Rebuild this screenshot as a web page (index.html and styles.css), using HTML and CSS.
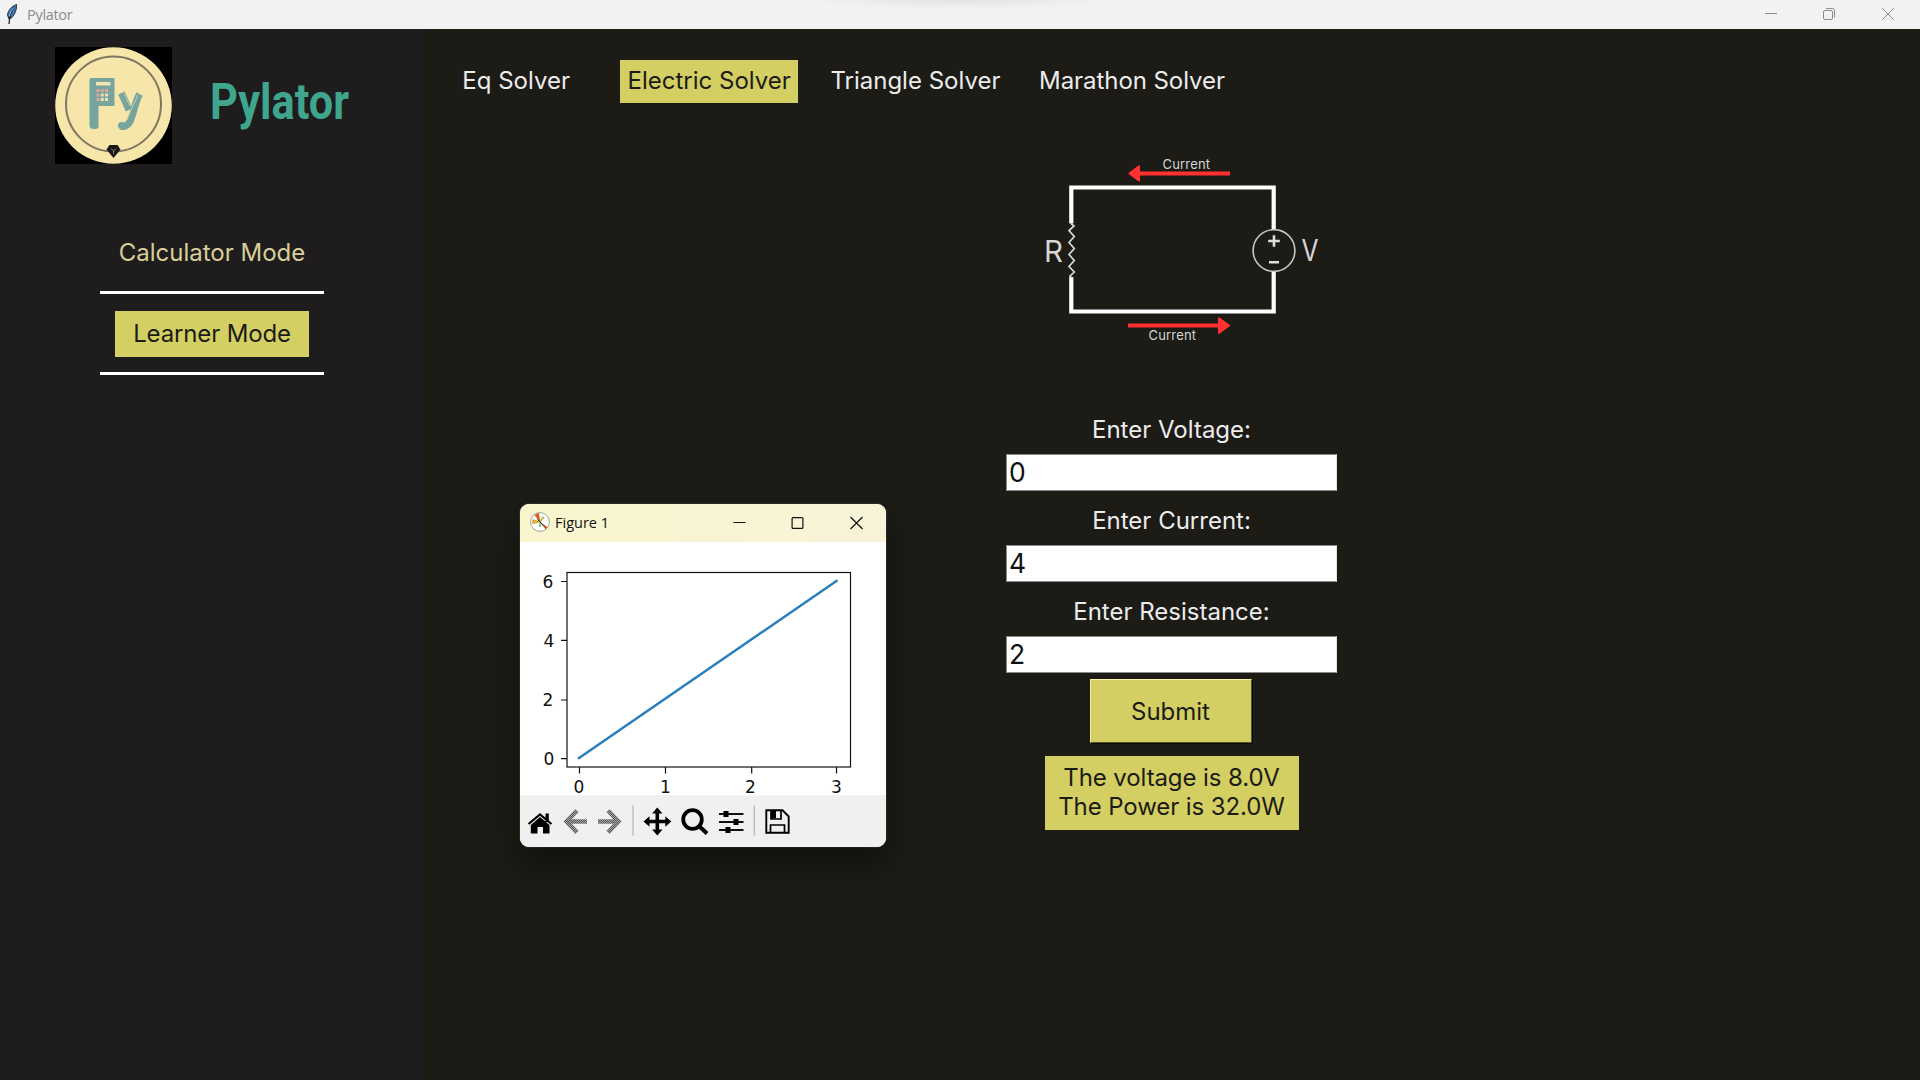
FILE: index.html
```html
<!DOCTYPE html>
<html lang="en">
<head>
<meta charset="utf-8">
<title>Pylator</title>
<link rel="stylesheet" href="styles.css">
</head>
<body>
<header class="titlebar">
  <svg class="feather" width="12" height="21" viewBox="0 0 12 21"><path d="M10.5.5C6 2 2 6 1.500 11L3 15l3-1.500C9 10 11 5 10.500.500Z" fill="#3f78c4" stroke="#2b3038" stroke-width="1"/><path d="M8.500 3C5 7 3.500 11 3 20" fill="none" stroke="#20242b" stroke-width="1.300"/><path d="M8 3.500C5.500 6 4 9 3.500 12" fill="none" stroke="#9cc4f0" stroke-width="1"/></svg>
  <span class="app-name">Pylator</span>
  <svg class="window-buttons" width="130" height="14" viewBox="0 0 130 14" fill="none" stroke="#8c8c8c"><path d="M0 6.500H12"/><rect x="58.500" y="3.500" width="9" height="9" rx="1.500"/><path d="M61 1.500H67.500Q69.500 1.500 69.500 3.500V10.500"/><path d="M117 1L129 13M129 1L117 13"/></svg>
</header>
<div class="workspace">
  <aside class="sidebar">
    <div class="brand">
      <svg width="117" height="117" viewBox="0 0 117 117"><rect width="117" height="117" fill="#000"/><circle cx="58.500" cy="58.500" r="58.300" fill="#f6e6aa"/><circle cx="58.500" cy="57" r="47.500" fill="none" stroke="#7d7763" stroke-width="2"/><path d="M36 31H59.500V59H43.500V80Q43 82 39 82Q34.500 82 34.500 79V33Q34.500 31 36 31Z" fill="#77a59e"/><rect x="41" y="35" width="14.500" height="3.500" fill="#f2e5ad"/><g fill="#dba69c"><rect x="41.500" y="42" width="3" height="3"/><rect x="45.800" y="42" width="3" height="3"/><rect x="50" y="42" width="3" height="3"/><rect x="41.500" y="46.500" width="3" height="3"/><rect x="41.500" y="51" width="3" height="3"/></g><g fill="#eee3ad"><rect x="45.800" y="46.500" width="3" height="3"/><rect x="50" y="46.500" width="3" height="3"/><rect x="45.800" y="51" width="3" height="3"/><rect x="50" y="51" width="3" height="3"/></g><path d="M66.500 46L74 63M84.500 47C79 57 78 74 72 78Q69 80.500 66 79" fill="none" stroke="#77a59e" stroke-width="7"/><circle cx="66.500" cy="78.500" r="3.500" fill="#77a59e"/><path d="M69 46L75 59M83 48L76 63L72 73" fill="none" stroke="#cbd3a6" stroke-width=".9"/><path d="M54.500 98H62.500L65.500 102.500L61 108L58.500 111L56 108L51.500 102.500Z" fill="#191817"/><path d="M56 101.500L58.500 104L61 101.500M58.500 104V107" fill="none" stroke="#8d8465" stroke-width="1"/></svg>
      <svg class="wordmark" width="142" height="72" viewBox="0 0 142 72"><text class="wordmark-text" x="-1" y="52" textLength="139" lengthAdjust="spacingAndGlyphs">Pylator</text></svg>
    </div>
    <nav class="modes">
      <a class="mode">Calculator Mode</a>
      <a class="mode active">Learner Mode</a>
    </nav>
  </aside>
  <main class="main">
    <nav class="tabs">
      <a class="tab">Eq Solver</a>
      <a class="tab active">Electric Solver</a>
      <a class="tab">Triangle Solver</a>
      <a class="tab">Marathon Solver</a>
    </nav>
    <svg class="circuit" width="303" height="220" viewBox="0 0 303 220">
      <g fill="none" stroke="#fff" stroke-width="4.200">
        <path d="M51.300 83.500V47.500H253.700V90"/>
        <path d="M51.300 137V171.500H253.700V131"/>
      </g>
      <path d="M51 83.500L54 86L49 90.500L54.300 96.500L49 102.500L54.300 108.500L49 114.500L54.300 120.500L49 126.500L54.300 132L50 136L52 138" fill="none" stroke="#d8d8d6" stroke-width="1.700"/>
      <circle cx="254" cy="110.500" r="20.900" fill="none" stroke="#c8c8c6" stroke-width="1.600"/>
      <path d="M248.200 101H259.800M254 95.200V106.800M249 122.300H259" fill="none" stroke="#dededc" stroke-width="2.600"/>
      <g fill="#ff3131" stroke="#ff3131" stroke-linejoin="round">
        <path d="M118 33.500H210M108 185.500H200" stroke-width="4"/>
        <path d="M109.500 33.500L119 26.200V40.500Z" stroke-width="2"/>
        <path d="M209 185.500L199 178.200V193Z" stroke-width="2"/>
      </g>
      <g class="circuit-text">
        <text x="142.500" y="29" textLength="47.500">Current</text>
        <text x="128.500" y="200" textLength="47.500">Current</text>
        <text class="symbol" x="24" y="121.500">R</text>
        <text class="symbol" x="281.500" y="121" textLength="17" lengthAdjust="spacingAndGlyphs">V</text>
      </g>
    </svg>
    <form class="solver">
      <label class="field">Enter Voltage:<input class="entry" value="0"></label>
      <label class="field">Enter Current:<input class="entry" value="4"></label>
      <label class="field">Enter Resistance:<input class="entry" value="2"></label>
      <button class="submit" type="button">Submit</button>
      <output class="result">The voltage is 8.0V<br>The Power is 32.0W</output>
    </form>
  </main>
</div>
<section class="figure">
  <header class="figure-bar">
    <svg width="20" height="20" viewBox="0 0 20 20"><circle cx="10" cy="10" r="9.400" fill="#fff" stroke="#8a8a80" stroke-width=".8"/><path d="M10 10L5 3.200Q6.500 1.800 8.600 1.600Z" fill="#ee5a12" stroke="#a33c08" stroke-width=".5"/><path d="M10 10L2.800 11.600Q2.300 9.500 3 7.600Z" fill="#f3b414" stroke="#a87a10" stroke-width=".5"/><path d="M10 10L17 15.200L15.700 16.800Z" fill="#e0501a" stroke="#8c3a10" stroke-width=".6"/><path d="M10 10L12.200 4.700L14.200 5.800Z" fill="#c8e04a" stroke="#758a20" stroke-width=".5"/><path d="M10 10L9.200 14.500H11Z" fill="#43c46a" stroke="#43c46a" stroke-width=".4"/><path d="M7.500 7.500L12.500 12.500" stroke="#403020" stroke-width="1"/></svg>
    <span class="figure-title">Figure 1</span>
    <svg class="figure-buttons" width="132" height="14" viewBox="0 0 132 14" fill="none" stroke="#111" stroke-width="1.200"><path d="M.5 6.500H12.500"/><rect x="59.100" y="1.600" width="10.800" height="10.800" rx="1"/><path d="M117.500 1L129.500 13M129.500 1L117.500 13"/></svg>
  </header>
  <svg class="plot" width="366" height="253" viewBox="0 0 366 253">
    <rect x="47" y="30.500" width="283.500" height="194.500" fill="none" stroke="#111" stroke-width="1.200"/>
    <path d="M41 39.500H47M41 98.300H47M41 158H47M41 216.700H47M59.500 225V231.500M145.500 225V231.500M231.700 225V231.500M316.500 225V231.500" stroke="#111" stroke-width="1.200"/>
    <path d="M59 216L316.500 39" stroke="#2a80bd" stroke-width="2.500" stroke-linecap="square"/>
    <g class="ticks">
      <text x="28" y="46">6</text><text x="29" y="104.700">4</text><text x="28" y="164">2</text><text x="29" y="222.700">0</text>
      <text x="59" y="251.300">0</text><text x="145.500" y="251.300">1</text><text x="230.500" y="251.300">2</text><text x="316.500" y="251.300">3</text>
    </g>
  </svg>
  <footer class="toolbar">
    <svg width="366" height="52" viewBox="0 0 366 52">
      <defs><pattern id="stipple" width="2" height="2" patternUnits="userSpaceOnUse"><rect width="2" height="2" fill="#a8a8a8"/><rect width="1" height="1" fill="#555"/><rect x="1" y="1" width="1" height="1" fill="#555"/></pattern></defs>
      <path d="M8.500 29L20 19.500L31.500 29" fill="none" stroke="#000" stroke-width="2.200"/>
      <path d="M25.500 18.500H28.800V27H25.500ZM20 22L29.500 30V38.500H23V32H17.500V38.500H10.800V30Z" fill="#000"/>
      <path d="M57 15.500L46.500 26.500L57 37.500M88 15.500L98.500 26.500L88 37.500" fill="none" stroke="url(#stipple)" stroke-width="4.500"/>
      <path d="M47 24.250H67V28.750H47ZM78 24.250H97V28.750H78Z" fill="url(#stipple)"/>
      <path d="M113 10.500V40.500M234.300 10.500V40.500" stroke="#bcbcbc" stroke-width="1.400"/>
      <path d="M137.300 17V36M128 26.500H147" stroke="#000" stroke-width="3.600"/>
      <path d="M137.300 12.500L142.500 18.500H132.100ZM137.300 40.500L142.500 34.500H132.100ZM123.500 26.500L129.500 21.300V31.700ZM151.300 26.500L145.300 21.300V31.700Z" fill="#000"/>
      <circle cx="172.500" cy="24.500" r="9.300" fill="none" stroke="#000" stroke-width="3.800"/>
      <path d="M179.500 31.500L187 38.500" stroke="#000" stroke-width="4"/>
      <path d="M199 19H223.500M199 27H223.500M199 35H223.500" stroke="#111" stroke-width="1.800"/>
      <path d="M203.500 16H208.500V22H203.500ZM213.500 24H218.500V30H213.500ZM205.500 32H210.500V38H205.500Z" fill="#000"/>
      <path d="M246.300 15.300H262.500L268.700 21.500V37.700H246.300Z" fill="none" stroke="#000" stroke-width="1.900"/>
      <path d="M251 15V24H261V15M250.500 37.500V30H264.500V37.500" fill="none" stroke="#000" stroke-width="1.700"/>
      <path d="M251 15.500H256V23.500H251Z" fill="#000"/>
    </svg>
  </footer>
</section>
</body>
</html>
```
FILE: styles.css
```css
* { box-sizing: border-box; }

body {
  display: flex;
  flex-direction: column;
  height: 1080px;
  margin: 0;
  overflow: hidden;
  background: #1c1b16;
  color: #ececec;
  font: 24px/29px Inter, sans-serif;
}

svg { display: block; flex: none; }

/* Main window title bar */
.titlebar {
  display: flex;
  height: 29px;
  padding: 4px 25px 0 6px;
  background:
    radial-gradient(ellipse 150px 9px at 960px 0, #e2e2e2, #e2e2e200) no-repeat,
    #f2f2f2;
}

.app-name {
  margin-left: 9px;
  color: #8c8c8c;
  font: 14.500px/22px "Open Sans", sans-serif;
  letter-spacing: -0.3px;
}

.window-buttons { margin: 3px 0 0 auto; }

.workspace { display: flex; flex: 1; }

/* Sidebar */
.sidebar {
  width: 423px;
  background: #1f1c1d;
}

.brand {
  display: flex;
  padding: 18px 0 0 55px;
}

.wordmark { margin: 20px 0 0 38.500px; }

.wordmark-text {
  fill: #3fa58d;
  font: bold 50px Roboto, sans-serif;
}

.modes {
  display: flex;
  flex-direction: column;
  align-items: center;
  width: 224px;
  margin: 66px 0 0 100px;
}

.mode {
  display: flex;
  justify-content: center;
  height: 46px;
  padding-top: 8px;
  color: #d8cf98;
}

.mode::after {
  content: "";
  position: absolute;
  width: 224px;
  height: 3px;
  margin-top: 53px;
  background: #fff;
}

.mode.active {
  width: 194px;
  margin-top: 35px;
  letter-spacing: -0.15px;
}

.active {
  background: #d3cf63;
  color: #1c1b16;
}

/* Content */
.main {
  display: flex;
  flex: 1;
  flex-direction: column;
  align-items: center;
}

.tabs {
  display: flex;
  align-self: flex-start;
  padding: 31px 0 0 32px;
}

.tab {
  height: 43px;
  padding: 6px 7.300px 8px;
}

.tab:nth-child(2) { margin-left: 43px; }
.tab:nth-child(3) { margin-left: 25px; }
.tab:nth-child(4) { margin-left: 24px; letter-spacing: -0.06px; }

.circuit { margin-top: 37px; }

.circuit-text {
  fill: #d6d6d4;
  font-size: 13px;
}

.symbol { font-size: 29.500px; }

.solver {
  display: flex;
  flex-direction: column;
  align-items: center;
  margin-top: 55px;
}

.field {
  display: flex;
  flex-direction: column;
  align-items: center;
  gap: 10px;
  height: 91px;
}

.entry {
  width: 331px;
  height: 37px;
  padding: 0 0 2px 2px;
  border: 1px solid;
  border-color: #8a8a8a #e3e3e3 #8a8a8a #8a8a8a;
  background: #fff;
  color: #111;
  font: 26.500px/32px Inter, sans-serif;
}

.submit {
  width: 162px;
  height: 64px;
  margin: -9px 2px 0 0;
  padding: 0;
  border: solid;
  border-width: 1px 1px 1px 1px;
  border-color: #f4f0a0 #55532c #55532c #f4f0a0;
  background: #d3cf63;
  box-shadow: 1px 1px #0b0b08;
  color: #1c1b16;
  font: inherit;
}

.result {
  width: 254px;
  height: 74px;
  margin-top: 13px;
  padding-top: 7px;
  background: #d3cf63;
  color: #1c1b16;
  letter-spacing: -0.1px;
  text-align: center;
}

/* Floating plot window */
.figure {
  position: absolute;
  top: 504px;
  left: 520px;
  width: 366px;
  height: 343px;
  overflow: hidden;
  border-radius: 9px;
  background: #fff;
  box-shadow: 0 16px 36px #00000070, 0 0 2px #6a6a60;
}

.figure-bar {
  display: flex;
  height: 38px;
  padding: 8px 14px 0 10px;
  background: linear-gradient(90deg, #f9f6cd, #f8f3d8);
}

.figure-title {
  margin-left: 5px;
  color: #111;
  font: 14.500px/21px "Open Sans", sans-serif;
}

.figure-buttons { margin: 4px 7.500px 0 auto; }

.ticks {
  fill: #111;
  font: 17px "DejaVu Sans", sans-serif;
  text-anchor: middle;
}

.toolbar { height: 52px; background: #f0f0f0; }
```
